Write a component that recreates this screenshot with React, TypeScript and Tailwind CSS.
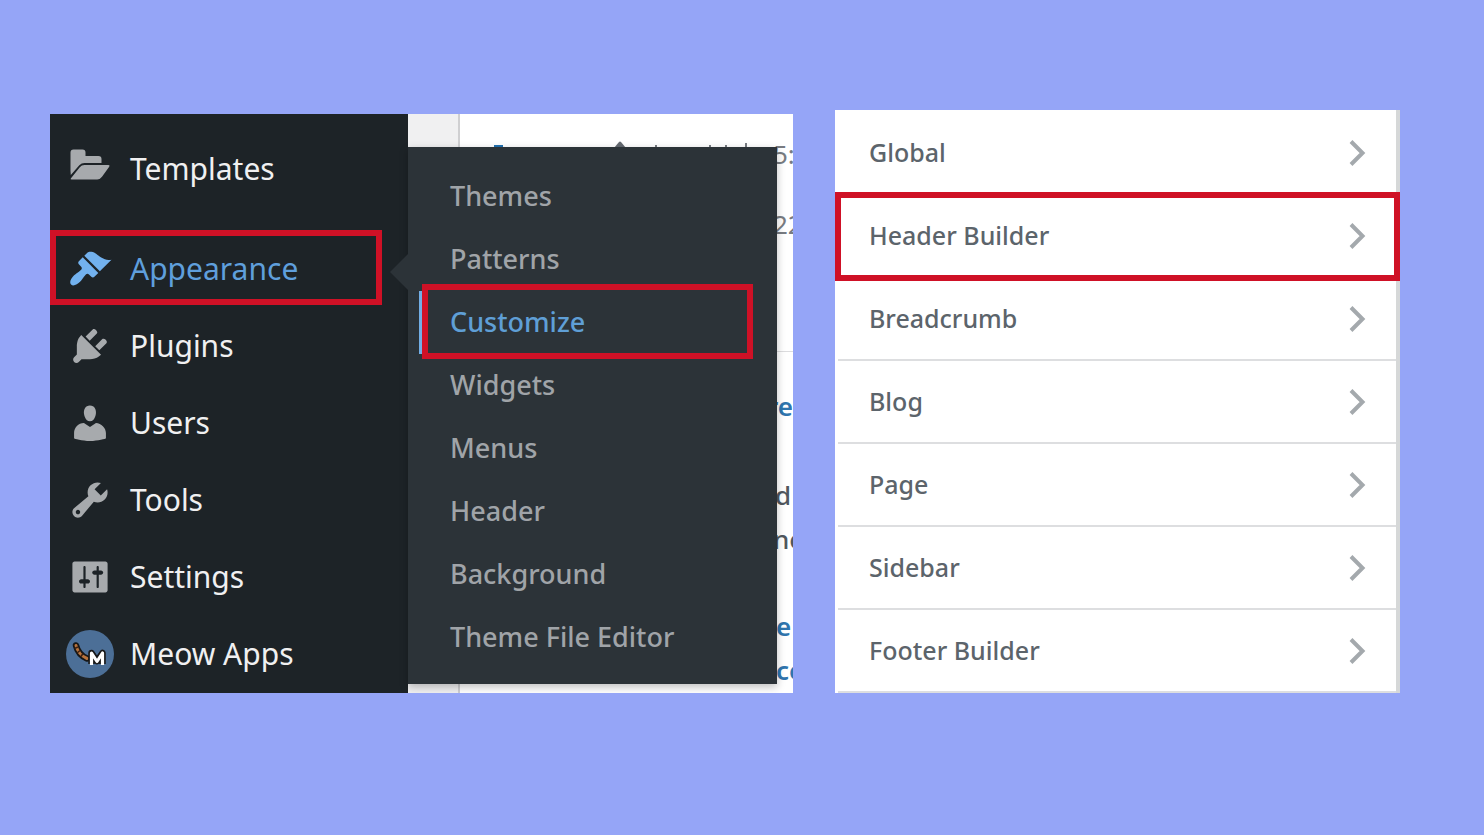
import type { ReactNode } from 'react';

type MenuEntry = { label: string; icon: ReactNode };

function Glyph({ d }: { d: string }) {
  return (
    <svg viewBox="0 0 20 20" className="size-11" fill="currentColor" fillRule="evenodd" aria-hidden="true">
      <path d={d} />
    </svg>
  );
}

function FolderIcon() {
  return (
    <svg viewBox="0 0 44 44" className="size-11" fill="currentColor" aria-hidden="true">
      <path d="M2.500 24V5.500q0-3 3-3h9q3 0 3 3v3.500h13q3 0 3 3v4H16.500q-3 0-5.200 2.200L2.800 28z" />
      <path d="M2.800 31.500 11.800 20.300q1.800-2.300 4.700-2.300h24q1.800 0 .7 1.700L34 29.800q-1.900 2.700-4.800 2.700H3.800q-1.800 0-1-1z" />
    </svg>
  );
}

function MeowIcon() {
  return (
    <svg viewBox="0 0 48 48" className="size-12" aria-hidden="true">
      <circle cx="24" cy="24" r="24" fill="#4c6f97" />
      <path d="M10 15.500C11.500 21.500 15 26 21 28.500" fill="none" stroke="#171717" strokeWidth="6.500" strokeLinecap="round" />
      <path d="M10 15.500C11.500 21.500 15 26 21 28.500" fill="none" stroke="#b8733c" strokeWidth="3" strokeLinecap="round" />
      <path d="M8.500 18.500l3.500-1.500M11 23l3-2.500M15 26.500l2-3" stroke="#3a2114" strokeWidth="1.500" />
      <path d="M25.500 34V23l5.500 8 5.500-8V34" fill="none" stroke="#171717" strokeWidth="6.500" strokeLinejoin="round" />
      <path d="M25.500 35V23l5.500 8.500 5.500-8.500V35" fill="none" stroke="#fff" strokeWidth="3.200" strokeLinejoin="round" />
    </svg>
  );
}

const BRUSH =
  'M14.480 11.060L7.410 3.990l1.500-1.500c.5-.56 2.300-.47 3.510.32 1.210.8 1.430 1.280 2.910 2.100 1.180.64 2.450 1.260 4.450.85zm-.71.71L6.700 4.700 4.930 6.470c-.39.39-.39 1.020 0 1.410l1.060 1.060c.39.39.39 1.030 0 1.420-.6.6-1.430 1.110-2.210 1.690-.35.26-.7.53-1.010.84C1.430 14.230.4 16.080 1.400 17.070c.99 1 2.840-.03 4.180-1.360.31-.31.58-.66.85-1.020.57-.78 1.080-1.610 1.690-2.210.39-.39 1.020-.39 1.410 0l1.060 1.060c.39.39 1.020.39 1.410 0z';
const PLUG =
  'M13.110 4.360L9.870 7.600 8 5.730l3.240-3.240c.35-.34 1.050-.2 1.560.32.52.51.66 1.210.31 1.550zm-8 1.770l.91-1.120 9.010 9.010-1.190.84c-.71.71-2.630 1.160-3.820 1.160H6.140L4.900 17.260c-.59.59-1.540.59-2.120 0-.59-.58-.59-1.530 0-2.120l1.240-1.240v-3.880c0-1.130.4-3.190 1.090-3.890zm7.260 3.970l3.240-3.240c.34-.35 1.040-.21 1.550.31.52.51.66 1.210.31 1.550l-3.240 3.250z';
const PERSON =
  'M10 9.250c-2.270 0-2.730-3.440-2.730-3.440C7 4.020 7.820 2 9.970 2c2.160 0 2.980 2.020 2.710 3.810 0 0-.41 3.440-2.680 3.440zm0 2.570L12.720 10c2.390 0 4.520 2.330 4.520 4.530v2.490s-3.650 1.130-7.240 1.130c-3.650 0-7.240-1.130-7.240-1.130v-2.490c0-2.250 1.940-4.480 4.470-4.480z';
const WRENCH =
  'M16.680 9.770c-1.340 1.340-3.300 1.670-4.950.99l-5.410 6.520c-.99.99-2.590.99-3.580 0s-.99-2.590 0-3.570l6.520-5.420c-.68-1.650-.35-3.610.99-4.950 1.280-1.280 3.120-1.620 4.720-1.060l-2.890 2.890 2.820 2.820 2.860-2.870c.53 1.580.18 3.390-1.080 4.650zM3.810 16.210c.4.39 1.040.39 1.430 0 .4-.4.4-1.040 0-1.430-.39-.4-1.030-.4-1.430 0-.39.39-.39 1.030 0 1.430z';
const SLIDERS =
  'M18 16V4c0-.55-.45-1-1-1H3c-.55 0-1 .45-1 1v12c0 .55.45 1 1 1h14c.55 0 1-.45 1-1zM8 11h1c.55 0 1 .45 1 1s-.45 1-1 1H8v1.500c0 .28-.22.5-.5.5s-.5-.22-.5-.5V13H6c-.55 0-1-.45-1-1s.45-1 1-1h1V5.500c0-.28.22-.5.5-.5s.5.22.5.5V11zm5-2h-1c-.55 0-1-.45-1-1s.45-1 1-1h1V5.500c0-.28.22-.5.5-.5s.5.22.5.5V7h1c.55 0 1 .45 1 1s-.45 1-1 1h-1v5.500c0 .28-.22.5-.5.5s-.5-.22-.5-.5V9z';

const entries: MenuEntry[] = [
  { label: 'Plugins', icon: <Glyph d={PLUG} /> },
  { label: 'Users', icon: <Glyph d={PERSON} /> },
  { label: 'Tools', icon: <Glyph d={WRENCH} /> },
  { label: 'Settings', icon: <Glyph d={SLIDERS} /> },
  { label: 'Meow Apps', icon: <MeowIcon /> },
];

const submenu = ['Themes', 'Patterns', 'Customize', 'Widgets', 'Menus', 'Header', 'Background', 'Theme File Editor'];

const sections = ['Global', 'Header Builder', 'Breadcrumb', 'Blog', 'Page', 'Sidebar', 'Footer Builder'];

function IconSlot({ children }: { children: ReactNode }) {
  return <span className="flex w-12 shrink-0 justify-center text-[#a7aaad]">{children}</span>;
}

function AdminMenu() {
  return (
    <nav aria-label="Admin" className="w-[358px] shrink-0 bg-[#1d2327] text-[30px] leading-10 text-[#f0f0f1]">
      <a href="#templates" className="flex h-[110px] items-center gap-4 pl-4">
        <IconSlot>
          <FolderIcon />
        </IconSlot>
        Templates
      </a>
      <a
        href="#appearance"
        className="mt-1.5 mr-[26px] flex h-[75px] items-center gap-4 border-[6px] border-[#cf1126] pt-0.5 pl-2.5 text-[#5f9fdc]"
      >
        <span className="flex w-12 shrink-0 justify-center text-[#72b1ee]">
          <Glyph d={BRUSH} />
        </span>
        Appearance
      </a>
      <div className="pt-0.5">
        {entries.map((e) => (
          <a key={e.label} href="#menu" className="flex h-[77px] items-center gap-4 pl-4">
            <IconSlot>{e.icon}</IconSlot>
            {e.label}
          </a>
        ))}
      </div>
    </nav>
  );
}

function Submenu() {
  return (
    <div className="absolute top-[33px] right-4 left-0 bg-[#2c3338] pt-[18px] pb-[15px] shadow-[0_3px_8px_rgba(0,0,0,0.25)]">
      <svg viewBox="0 0 18 36" className="absolute top-[107px] -left-[18px] h-9 w-[18px]" aria-hidden="true">
        <path d="M18 0 0 18l18 18z" fill="#2c3338" />
      </svg>
      {submenu.map((label) =>
        label === 'Customize' ? (
          <a
            key={label}
            href="#customize"
            className="relative ml-[11px] flex h-[63px] items-center border-l-4 border-[#72aee6] pl-[27px] text-[#5f9fd6]"
          >
            {label}
            <span className="absolute -top-[7px] right-6 -bottom-[5px] -left-px border-[6px] border-[#cf1126]" />
          </a>
        ) : (
          <a key={label} href="#submenu" className="flex h-[63px] items-center pl-[42px]">
            {label}
          </a>
        ),
      )}
    </div>
  );
}

function PageBehind() {
  return (
    <div className="flex h-full overflow-hidden bg-white">
      <div className="w-[52px] shrink-0 border-r-2 border-[#cfcfd1] bg-[#f0f0f1]" />
      <div className="flex min-w-0 grow flex-col text-[26px] leading-[44px] text-[#787c82]">
        <div className="flex h-[62px] items-end justify-between">
          <svg viewBox="0 0 280 12" className="mb-[26px] ml-8 h-3 w-[280px]" aria-hidden="true">
            <path d="M2 7h9v5H2z" fill="#2271b1" />
            <path d="M122 10l5-6q1-1 2 0l5 6v2h-12z" fill="#646970" />
            <path d="M163 7h2v5h-2zM217 7h2v5h-2zM233 7h2v5h-2zM253 5h2v7h-2z" fill="#787c82" />
          </svg>
          <span className="w-5 shrink-0">5:</span>
        </div>
        <div className="flex h-[70px] items-end justify-end">
          <span className="w-5">22</span>
        </div>
        <div className="flex h-[106px] justify-end border-b border-[#dcdcde]" />
        <div className="flex h-[76px] flex-col items-end justify-end font-semibold text-[#2f75ae]">
          <span className="w-[26px]">re</span>
        </div>
        <div className="flex h-[133px] flex-col items-end justify-end font-medium text-[#50575e]">
          <span className="w-[18px]">d</span>
          <span className="w-5">no</span>
        </div>
        <div className="flex h-[131px] flex-col items-end justify-end font-semibold text-[#2f75ae]">
          <span className="w-[17px]">e</span>
          <span className="w-[17px]">ce</span>
        </div>
      </div>
    </div>
  );
}

function CustomizerList() {
  return (
    <nav aria-label="Customizer sections" className="border-r-4 border-[#d6d8d8] bg-white pt-0.5 text-[25px] font-medium text-[#5c646b]">
      {sections.map((label) => (
        <a key={label} href="#section" className="relative ml-[3px] flex h-[83px] items-center justify-between border-b-2 border-[#dddee0] pr-[30px] pl-[31px]">
          {label}
          <svg viewBox="0 0 18 28" className="h-7 w-[18px]" fill="none" stroke="#a4a9ad" strokeWidth="4" aria-hidden="true">
            <path d="M3 2.500 14.500 14 3 25.500" />
          </svg>
          {label === 'Header Builder' && (
            <span className="absolute -top-[3px] -right-1 -bottom-[5px] -left-[3px] border-[6px] border-[#cf1126]" />
          )}
        </a>
      ))}
    </nav>
  );
}

export default function App() {
  return (
    <main className="grid min-h-screen grid-cols-[743fr_565fr] items-start gap-[42px] bg-[#95a5f7] pt-[110px] pr-[84px] pb-10 pl-[50px] font-['Noto_Sans','Open_Sans',sans-serif]">
      <section className="mt-1 flex overflow-hidden">
        <AdminMenu />
        <div className="relative min-w-0 grow text-[27px] font-medium text-[#a0a4a8]">
          <div className="h-[579px] font-normal">
            <PageBehind />
          </div>
          <Submenu />
        </div>
      </section>
      <CustomizerList />
    </main>
  );
}
